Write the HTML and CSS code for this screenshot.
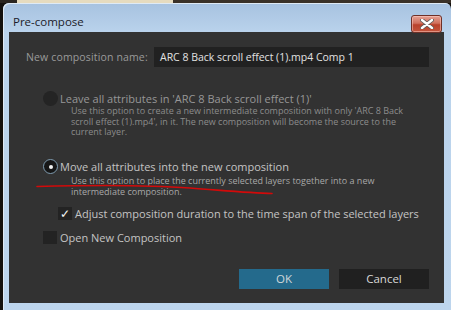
FILE: index.html
```html
<!DOCTYPE html>
<html lang="en">
<head>
    <meta charset="UTF-8">
    <title>Pre-compose</title>
    <link rel="stylesheet" href="styles.css">
</head>
<body>
    <div class="backdrop">
        <div class="bg-dark"></div>
        <div class="bg-light"></div>
        <div class="bg-brown"></div>
    </div>
    <div class="window">
        <div class="titlebar">
            <span class="title">Pre-compose</span>
            <button class="close-btn">
                <svg width="14" height="10" viewBox="0 0 14 10">
                    <path d="M2 1 L12 9 M12 1 L2 9" stroke="#5a5a5a" stroke-width="4" stroke-linecap="round"/>
                    <path d="M2 1 L12 9 M12 1 L2 9" stroke="#ffffff" stroke-width="2.4" stroke-linecap="round"/>
                </svg>
            </button>
        </div>
        <div class="panel">
            <div class="name-row">
                <span class="name-label">New composition name:</span>
                <div class="name-input">ARC 8 Back scroll effect (1).mp4 Comp 1</div>
            </div>

            <div class="option disabled">
                <div class="option-head">
                    <span class="radio"></span>
                    <span class="option-label">Leave all attributes in 'ARC 8 Back scroll effect (1)'</span>
                </div>
                <p class="option-desc">Use this option to create a new intermediate composition with only 'ARC 8 Back<br>scroll effect (1).mp4', in it. The new composition will become the source to the<br>current layer.</p>
            </div>

            <div class="option second">
                <div class="option-head">
                    <span class="radio checked"></span>
                    <span class="option-label">Move all attributes into the new composition</span>
                </div>
                <p class="option-desc">Use this option to place the currently selected layers together into a new<br>intermediate composition.</p>
            </div>

            <div class="check-row indent">
                <span class="checkbox">&#10003;</span>
                <span class="check-label">Adjust composition duration to the time span of the selected layers</span>
            </div>
            <div class="check-row">
                <span class="checkbox"></span>
                <span class="check-label">Open New Composition</span>
            </div>

            <div class="button-container">
                <button class="btn btn-ok">OK</button>
                <button class="btn btn-cancel">Cancel</button>
            </div>
        </div>

        <!-- red marker stroke drawn over the dialog -->
        <svg class="marker" width="451" height="310" viewBox="0 0 451 310">
            <path d="M37 186.5 C 90 185, 150 185, 190 188 S 250 193, 272 193.5" fill="none" stroke="#d20a0a" stroke-width="1.6" stroke-linecap="round"/>
        </svg>
    </div>
</body>
</html>
```

FILE: styles.css
```css
body {
    margin: 0;
    background-color: #14110e;
    font-family: "Open Sans", "Noto Sans", sans-serif;
    overflow: hidden;
}

.backdrop {
    display: flex;
    height: 3px;
}

.bg-dark {
    width: 17px;
    background-color: #2a2520;
}

.bg-light {
    width: 156px;
    background-color: #e6dbbf;
}

.bg-brown {
    flex: 1;
    background-color: #3a3128;
}

.window {
    margin-left: 3px;
    width: 448px;
    height: 320px;
    box-sizing: border-box;
    padding: 0 6px 0 6px;
    border-radius: 6px 6px 0 0;
    background: linear-gradient(#a7c2e0, #bad3ec 30px, #bdd5ed);
    box-shadow: inset 1px 1px 0 #dfeaf5;
}

.titlebar {
    height: 29px;
    display: flex;
    align-items: center;
    justify-content: space-between;
}

.title {
    margin-left: 4px;
    margin-top: 7px;
    font-family: "Open Sans", sans-serif;
    font-size: 11.5px;
    color: #1c1c2a;
}

.close-btn {
    margin-top: 12px;
    margin-right: 3px;
    width: 31px;
    height: 18px;
    padding: 0;
    display: flex;
    align-items: center;
    justify-content: center;
    border: 1px solid #6e3027;
    border-radius: 3px;
    background: linear-gradient(#e5a194, #d0705d 45%, #b9412b 55%, #c4553d);
    box-shadow: inset 0 0 0 1px rgba(255, 210, 200, 0.5);
}

.panel {
    width: 435px;
    height: 271px;
    box-sizing: border-box;
    padding: 15px 15px 0 17px;
    background-color: #323232;
    display: flex;
    flex-direction: column;
}

.name-row {
    display: flex;
    align-items: center;
    height: 20px;
}

.name-label {
    width: 128px;
    white-space: nowrap;
    font-size: 10.5px;
    letter-spacing: 0.15px;
    color: #9a9a9a;
}

.name-input {
    flex: 1;
    height: 20px;
    line-height: 20px;
    padding-left: 6px;
    background-color: #212121;
    font-size: 10.5px;
    color: #e2e2e2;
}

.option {
    margin-top: 23px;
    margin-left: 17px;
}

.option.second {
    margin-top: 21px;
}

.option-head {
    display: flex;
    align-items: center;
    height: 16px;
}

.radio {
    width: 15px;
    height: 15px;
    box-sizing: border-box;
    border-radius: 50%;
    background-color: #242424;
    margin-right: 2px;
    display: flex;
    align-items: center;
    justify-content: center;
}

.radio.checked {
    background-color: #161616;
    border: 1px solid #7f9cb0;
}

.radio.checked::after {
    content: "";
    width: 4px;
    height: 4px;
    border-radius: 50%;
    background-color: #f2f2f2;
}

.option-label {
    font-size: 11px;
    white-space: nowrap;
    color: #c4c4c4;
}

.disabled .option-label {
    color: #979797;
}

.option-desc {
    margin: 0 0 0 28px;
    font-size: 9px;
    line-height: 11px;
    white-space: nowrap;
    color: #a8a8a8;
}

.disabled .option-desc {
    line-height: 10.5px;
    color: #8c8c8c;
}

.check-row {
    display: flex;
    align-items: center;
    height: 16px;
    margin-top: 8px;
    margin-left: 17px;
}

.check-row.indent {
    margin-top: 9px;
    margin-left: 32px;
}

.checkbox {
    width: 14px;
    height: 13px;
    margin-right: 3px;
    background-color: #232323;
    color: #f4f4f4;
    font-size: 12px;
    line-height: 13px;
    text-align: center;
}

.check-label {
    font-size: 11px;
    white-space: nowrap;
    color: #c4c4c4;
}

.button-container {
    margin-top: 23px;
    display: flex;
    justify-content: flex-end;
    gap: 10px;
}

.btn {
    width: 90px;
    height: 20px;
    padding: 0;
    border: none;
    font-family: "Open Sans", sans-serif;
    font-size: 11.5px;
}

.btn-ok {
    background-color: #246a8c;
    color: #d0d6da;
}

.btn-cancel {
    background-color: #202020;
    color: #d8d8d8;
}

.marker {
    position: absolute;
    top: 0;
    left: 0;
    pointer-events: none;
}
```
